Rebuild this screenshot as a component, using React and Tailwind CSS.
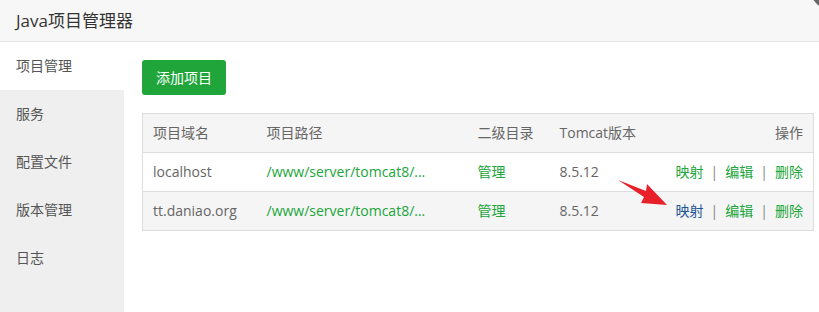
import React from 'react';

const menu = ['项目管理', '服务', '配置文件', '版本管理', '日志'];

const rows = [
  { domain: 'localhost', path: '/www/server/tomcat8/...', version: '8.5.12', hover: false },
  { domain: 'tt.daniao.org', path: '/www/server/tomcat8/...', version: '8.5.12', hover: true },
];

function Actions({ hover }) {
  return (
    <div className="flex items-center justify-end">
      <a className={hover ? 'text-[#1e5494]' : 'text-[#20a53a]'}>映射</a>
      <span className="mx-[7px] text-[#888]">|</span>
      <a className="text-[#20a53a]">编辑</a>
      <span className="mx-[7px] text-[#888]">|</span>
      <a className="text-[#20a53a]">删除</a>
    </div>
  );
}

export default function App() {
  return (
    <div
      className="relative w-[819px] h-[312px] overflow-hidden bg-white flex flex-col"
      style={{ fontFamily: '"Open Sans", "Noto Sans CJK SC", sans-serif' }}
    >
      <div className="h-[42px] shrink-0 bg-[#f7f7f7] border-b border-[#e5e5e5] flex items-center pl-4 text-[17px] text-[#333]">
        Java项目管理器
      </div>
      <div className="absolute right-[-35px] top-[-34px] w-[44px] h-[44px] rounded-full bg-[#666]" />

      <div className="flex flex-1">
        <div className="w-[124px] shrink-0 bg-[#efefef]">
          {menu.map((m, i) => (
            <div
              key={m}
              className={`h-12 flex items-center pl-4 text-sm text-[#555] ${i === 0 ? 'bg-white' : ''}`}
            >
              {m}
            </div>
          ))}
        </div>

        <div className="flex-1 pl-[18px] pt-[18px]">
          <button className="h-[35px] w-[84px] rounded-[3px] bg-[#20a53a] text-white text-sm">
            添加项目
          </button>

          <table className="mt-[18px] w-[672px] border border-[#ddd] border-collapse text-sm text-[#666] table-fixed">
            <colgroup>
              <col className="w-[114px]" />
              <col className="w-[211px]" />
              <col className="w-[82px]" />
              <col className="w-[100px]" />
              <col />
            </colgroup>
            <thead>
              <tr className="h-[39px] bg-[#f5f5f5]">
                <th className="px-[10px] text-left font-normal">项目域名</th>
                <th className="px-[10px] text-left font-normal">项目路径</th>
                <th className="px-[10px] text-left font-normal">二级目录</th>
                <th className="px-[10px] text-left font-normal">Tomcat版本</th>
                <th className="px-[10px] text-right font-normal">操作</th>
              </tr>
            </thead>
            <tbody>
              {rows.map((r) => (
                <tr key={r.domain} className={`h-[39px] border-t border-[#ddd] ${r.hover ? 'bg-[#f5f5f5]' : 'bg-white'}`}>
                  <td className="px-[10px] whitespace-nowrap">{r.domain}</td>
                  <td className="px-[10px] whitespace-nowrap text-[#20a53a]">{r.path}</td>
                  <td className="px-[10px] text-[#20a53a]">管理</td>
                  <td className="px-[10px]">{r.version}</td>
                  <td className="px-[10px]">
                    <Actions hover={r.hover} />
                  </td>
                </tr>
              ))}
            </tbody>
          </table>
        </div>
      </div>

      <svg className="absolute left-0 top-0 pointer-events-none" width="819" height="312">
        <path d="M618 180 L646 191 L647 184 L667 205 L641 203 L644 197 Z" fill="#e8202a" />
      </svg>
    </div>
  );
}
